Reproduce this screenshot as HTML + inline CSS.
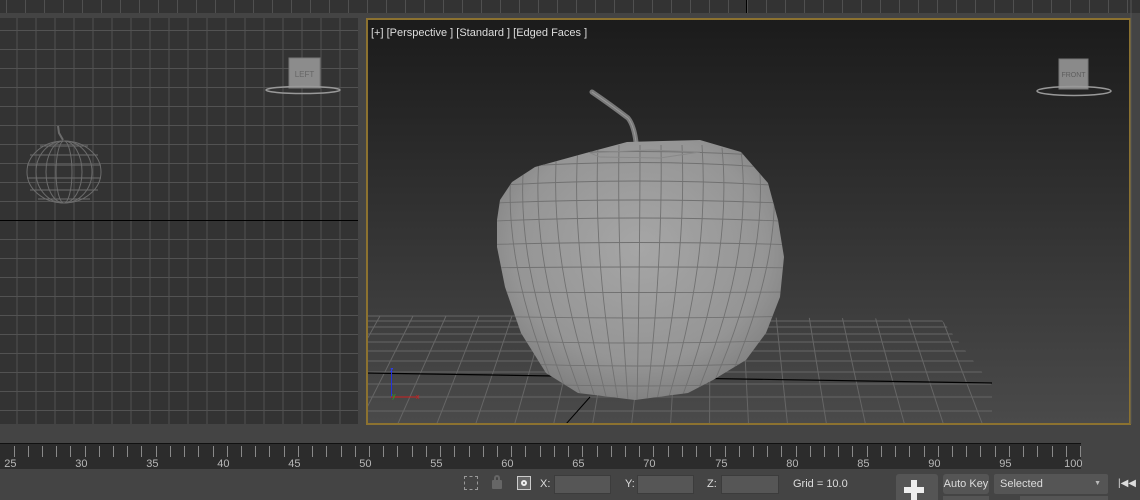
<!DOCTYPE html>
<html><head><meta charset="utf-8"><style>
*{margin:0;padding:0;box-sizing:border-box}
html,body{width:1140px;height:500px;overflow:hidden}
body{background:#444;font-family:"Liberation Sans",sans-serif;position:relative}
.abs{position:absolute}
.lbl{color:#ddd;font-size:11px}
.inp{background:#565656;border:1px solid #3c3c3c;height:19px}
</style></head><body>
<svg class="abs" style="left:0;top:0" width="1140" height="500">
<defs>
<pattern id="g" x="-2.5" y="11" width="19" height="19" patternUnits="userSpaceOnUse"><rect width="19" height="19" fill="#333"/><path d="M0 0.5H19M0.5 0V19" stroke="#525252" stroke-width="1"/></pattern>
<pattern id="gt" x="6" y="0" width="19" height="19" patternUnits="userSpaceOnUse"><rect width="19" height="19" fill="#333"/><path d="M0.5 0V19" stroke="#505050"/></pattern>
<linearGradient id="vp" x1="0" y1="0" x2="0" y2="1"><stop offset="0" stop-color="#1b1b1b"/><stop offset="1" stop-color="#4a4a4a"/></linearGradient>
<radialGradient id="ap" cx="0.5" cy="0.42" r="0.6"><stop offset="0" stop-color="#a6a6a6"/><stop offset="0.7" stop-color="#959595"/><stop offset="1" stop-color="#7c7c7c"/></radialGradient>
<clipPath id="ac"><path d="M497,220 L500,200 L512,182 L535,167 L586,153 L627,142 L700,140 L741,152 L768,183 L778,220 L784,257 L780,297 L766,333 L746,360 L713,380 L688,393 L635,400 L578,393 L546,373 L521,333 L505,287 L497,247 Z"/></clipPath>
<clipPath id="fc"><path d="M366,314 L941,319 L992,385 L992,424 L366,424Z"/></clipPath>
<clipPath id="vc"><rect x="368" y="20" width="761" height="403"/></clipPath>
</defs>
<rect x="0" y="0" width="1140" height="13" fill="url(#gt)"/>
<line x1="746.5" y1="0" x2="746.5" y2="13" stroke="#000"/>
<rect x="0" y="13" width="1140" height="5" fill="#444"/>
<rect x="0" y="18" width="358" height="406" fill="url(#g)"/>
<line x1="0" y1="220.5" x2="358" y2="220.5" stroke="#000"/>
<g fill="none" stroke="#6c6c6c" stroke-width="1">
<ellipse cx="64" cy="172" rx="37" ry="31"/>
<ellipse cx="64" cy="172" rx="28" ry="31"/>
<ellipse cx="64" cy="172" rx="18" ry="31"/>
<ellipse cx="64" cy="172" rx="8" ry="31"/>
<path d="M30,155H98M27,165H101M27,178H101M30,190H98M38,199H90M40,146H88"/>
<path d="M58,126 L59,133 L63,140" stroke-width="2"/>
</g>
<rect x="289" y="58" width="31" height="30" fill="#8c8c8c" stroke="#777"/>
<text x="304.5" y="77" font-size="8" fill="#666" text-anchor="middle" font-family="Liberation Sans">LEFT</text>
<ellipse cx="303" cy="90" rx="37" ry="3.5" fill="none" stroke="#999" stroke-width="1.5"/>
<rect x="358" y="18" width="8" height="406" fill="#444"/>
<rect x="366" y="18" width="765" height="406" fill="url(#vp)"/>
<g clip-path="url(#vc)">
<g clip-path="url(#fc)" stroke="#666" stroke-width="1" fill="none">
<path d="M300,316H1000M300,321H1000M300,327H1000M300,334H1000M300,342H1000M300,351H1000M300,361H1000M300,372H1000M300,384H1000M300,397H1000M300,411H1000"/>
<path d="M380,316L118,786M413,316L177,786M446,316L236,786M479,316L295,786M512,316L354,786M545,316L413,786M578,316L472,786M611,316L531,786M644,316L590,786M677,316L649,786M710,316L708,786M743,316L767,786M776,316L826,786M809,316L885,786M842,316L944,786M875,316L1003,786M908,316L1062,786M941,316L1121,786"/>
</g>
<line x1="366" y1="373" x2="992" y2="383" stroke="#000" stroke-width="1.2"/>
<line x1="590" y1="397" x2="566" y2="424" stroke="#000"/>
<path d="M592,92 Q611,105 628,118 Q636,128 637,155" fill="none" stroke="#7a7a7a" stroke-width="5" stroke-linecap="round"/>
<path d="M592,92 Q611,105 628,118 Q636,128 637,155" fill="none" stroke="#999" stroke-width="1"/>
<g clip-path="url(#ac)">
<rect x="490" y="135" width="300" height="270" fill="url(#ap)"/>
<g fill="none" stroke="#717171" stroke-width="0.9">
<path d="M472,187Q640,175 800,187M472,204Q640,196 800,204M472,222Q640,214 800,222M472,245Q640,240 800,245M472,268Q640,266 800,268M472,292Q640,293 800,292M472,316Q640,320 800,316M472,340Q640,346 800,340M472,362Q640,370 800,362M472,382Q640,390 800,382M472,170Q640,155 800,170M472,158Q640,145 800,158"/>
<path d="M513,150Q498,260 560,400M525,150Q512,260 570,400M540,148Q528,260 583,400M557,146Q548,260 596,400M578,145Q570,260 607,400M598,145Q593,260 618,400M619,145Q617,260 628,400M640,145Q640,260 637,400M661,145Q663,260 647,400M682,145Q687,260 657,400M702,145Q710,260 668,400M722,148Q733,260 681,400M741,150Q754,260 694,400M758,152Q772,260 706,400M772,160Q786,260 720,400"/>
<path d="M590,153L650,150L700,152L660,158L600,157Z" stroke="#888"/>
</g>
</g>
<rect x="1059" y="59" width="29" height="30" fill="#8a8a8a" stroke="#777"/>
<text x="1073.5" y="77" font-size="7" fill="#5e5e5e" text-anchor="middle" font-family="Liberation Sans">FRONT</text>
<ellipse cx="1074" cy="91" rx="37" ry="4.5" fill="none" stroke="#999" stroke-width="1.5"/>
<line x1="391.5" y1="368" x2="391.5" y2="397" stroke="#2233dd"/>
<line x1="391" y1="397" x2="418" y2="397" stroke="#cc2222"/>
<text x="390" y="372" font-size="7" fill="#3344ee">z</text>
<text x="392" y="398" font-size="7" fill="#22aa22">y</text>
<text x="416" y="399" font-size="7" fill="#cc2222">x</text>
</g>
<rect x="367" y="19" width="763" height="405" fill="none" stroke="#8c7230" stroke-width="2"/>
<text x="371" y="36" font-size="11" fill="#ddd" font-family="Liberation Sans">[+] [Perspective ] [Standard ] [Edged Faces ]</text>
<rect x="0" y="443" width="1081" height="26" fill="#2c2c2c"/>
<line x1="0" y1="443.5" x2="1081" y2="443.5" stroke="#111"/>
<g id="ticks" stroke="#8a8a8a"></g>
<g id="nums" fill="#b8b8b8" font-size="11" font-family="Liberation Sans"></g>
<line x1="1131" y1="0" x2="1131" y2="424" stroke="#555"/>
</svg>
<script>
var t=document.getElementById('ticks'),n=document.getElementById('nums'),s='',m='';
for(var u=25;u<=100;u++){var x=Math.round(1080-(100-u)*14.22)+0.5;s+='<line x1="'+x+'" y1="446" x2="'+x+'" y2="457"/>';
if(u%5==0){m+='<text x="'+(x+2)+'" y="467" text-anchor="end">'+u+'</text>';}}
t.innerHTML=s;n.innerHTML=m;
</script>
<div class="abs" style="left:464px;top:476px;width:14px;height:14px;border:1px dashed #999"></div>
<div class="abs" style="left:492px;top:480px;width:10px;height:9px;background:#666;border-radius:1px"></div>
<div class="abs" style="left:494px;top:475px;width:6px;height:7px;border:2px solid #666;border-bottom:none;border-radius:3px 3px 0 0"></div>
<div class="abs" style="left:517px;top:476px;width:14px;height:14px;border:1px solid #ccc;background:#666"><div style="margin:3px;width:6px;height:6px;border-radius:50%;border:2px solid #eee"></div></div>
<div class="abs lbl" style="left:540px;top:478px">X:</div>
<div class="abs inp" style="left:554px;top:475px;width:57px"></div>
<div class="abs lbl" style="left:625px;top:478px">Y:</div>
<div class="abs inp" style="left:637px;top:475px;width:57px"></div>
<div class="abs lbl" style="left:707px;top:478px">Z:</div>
<div class="abs inp" style="left:721px;top:475px;width:58px"></div>
<div class="abs lbl" style="left:793px;top:478px">Grid = 10.0</div>
<div class="abs" style="left:896px;top:474px;width:42px;height:26px;background:#555;border-radius:3px 3px 0 0"></div>
<div class="abs" style="left:911px;top:480px;width:6px;height:20px;background:#eee"></div>
<div class="abs" style="left:904px;top:487px;width:20px;height:6px;background:#eee"></div>
<div class="abs" style="left:943px;top:474px;width:46px;height:20px;background:#555;border-radius:3px;color:#ddd;font-size:11px;line-height:20px;text-align:center">Auto Key</div>
<div class="abs" style="left:994px;top:474px;width:114px;height:20px;background:#555;border-radius:2px;color:#ddd;font-size:11px;line-height:20px;padding-left:6px">Selected<span style="position:absolute;right:7px;font-size:7px;color:#bbb">▼</span></div>
<div class="abs" style="left:1118px;top:478px;color:#ddd;font-size:10px">|◀◀</div>
<div class="abs" style="left:943px;top:496px;width:46px;height:4px;background:#555"></div>
<div class="abs" style="left:1020px;top:496px;width:88px;height:4px;background:#555"></div>
</body></html>
